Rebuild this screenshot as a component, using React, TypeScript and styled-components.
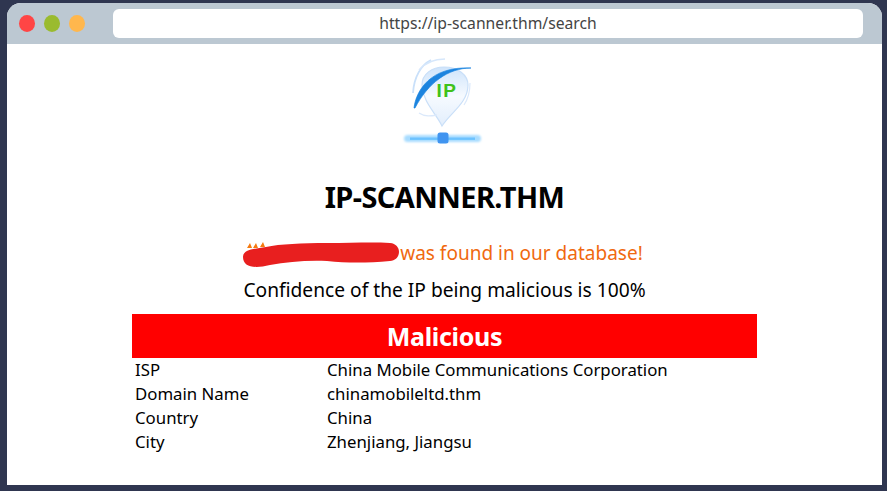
import React from "react";
import styled, { createGlobalStyle } from "styled-components";

const Global = createGlobalStyle`
  html, body { margin: 0; padding: 0; height: 100%; background: #2f3650; }
  body { font-family: "Noto Sans", "Open Sans", "Liberation Sans", sans-serif; overflow: hidden; }
`;
const Page = styled.div`
  box-sizing: border-box; width: 887px; height: 491px; padding: 3px 5px 6px 7px;
`;
const Window = styled.div`
  height: 100%; display: flex; flex-direction: column; background: #fff;
  border-radius: 14px 14px 0 0; overflow: hidden;
`;
const TitleBar = styled.div`
  flex: 0 0 41px; box-sizing: border-box; height: 41px; background: #bcc8d2;
  display: flex; align-items: flex-start; padding: 6px 19px 0 12px;
`;
const Dots = styled.div`
  display: flex; gap: 9px; margin-top: 6px; width: 94px; flex: 0 0 94px;
`;
const Dot = styled.span<{ $c: string }>`
  width: 16px; height: 17px; border-radius: 50%; background: ${p => p.$c};
`;
const Address = styled.div`
  flex: 1; height: 29px; background: #fff; border-radius: 6px; color: #444;
  font-size: 15.7px; line-height: 29px; text-align: center;
`;
const Content = styled.main`
  flex: 1; display: flex; flex-direction: column; align-items: center;
`;
const Logo = styled.svg`
  display: block; margin-top: 9px; width: 90px; height: 92px;
`;
const LogoText = styled.text`
  font-family: "Liberation Sans", sans-serif; font-size: 19px; font-weight: 700; fill: #3fc21a; letter-spacing: 1.5px;
`;
const Title = styled.h1`
  margin: 33px 0 0; font-size: 29px; line-height: 38px; font-weight: 700; color: #000; letter-spacing: -0.6px;
`;
const Found = styled.p`
  margin: 24px 0 0 -4px; font-size: 19px; line-height: 26px; color: #f0690f; display: flex; align-items: center;
`;
const Redaction = styled.svg`
  display: block; width: 158px; height: 30px; flex: none; margin: -2px 0;
`;
const Confidence = styled.p`
  margin: 11px 0 0; font-size: 19.2px; line-height: 26px; color: #000;
`;
const Banner = styled.div`
  margin-top: 11px; width: 625px; height: 44px; background: #ff0000; color: #fff;
  font-size: 25px; font-weight: 700; line-height: 44px; text-align: center; letter-spacing: -0.3px;
`;
const Details = styled.dl`
  margin: 0; width: 625px; display: grid; grid-template-columns: 192px 1fr; padding-left: 3px; box-sizing: border-box;
  font-size: 16.8px; line-height: 24px; color: #000;
  dt, dd { margin: 0; }
`;

const rows: [string, string][] = [
  ["ISP", "China Mobile Communications Corporation"],
  ["Domain Name", "chinamobileltd.thm"],
  ["Country", "China"],
  ["City", "Zhenjiang, Jiangsu"],
];

export default function App() {
  return (
    <Page>
      <Global />
      <Window>
        <TitleBar>
          <Dots>
            <Dot $c="#ff4545" />
            <Dot $c="#9abb2f" />
            <Dot $c="#ffb74d" />
          </Dots>
          <Address>https://ip-scanner.thm/search</Address>
        </TitleBar>
        <Content>
          <Logo viewBox="0 0 90 92">
            <defs>
              <linearGradient id="pin" x1="0" y1="0" x2="0" y2="1">
                <stop offset="0" stopColor="#cfe4fb" />
                <stop offset="0.5" stopColor="#f6faff" />
                <stop offset="1" stopColor="#e2eefc" />
              </linearGradient>
              <filter id="soft" x="-20%" y="-200%" width="140%" height="500%"><feGaussianBlur stdDeviation="1.1" /></filter>
              <filter id="soft2" x="-20%" y="-20%" width="140%" height="140%"><feGaussianBlur stdDeviation="0.35" /></filter>
            </defs>
            <path d="M42 73 C36 60 23 50 22 32 C22 21 32 14 44 14 C58 14 68 22 68 32 C68 50 50 60 42 73 Z" fill="url(#pin)" stroke="#c9dff8" strokeWidth="1.2" filter="url(#soft2)" />
            <path d="M13 40 C14 24 21 12 31 7" fill="none" stroke="#c9e0fa" strokeWidth="1.8" filter="url(#soft2)" />
            <path d="M19 17 C25 10 34 6 45 6" fill="none" stroke="#d6e7fb" strokeWidth="1.4" filter="url(#soft2)" />
            <path d="M70 30 C70 40 68 46 64 52" fill="none" stroke="#dbe9fb" strokeWidth="1.2" filter="url(#soft2)" />
            <path d="M19 60 C25 64 31 63 37 62" fill="none" stroke="#dbe9fb" strokeWidth="1.4" filter="url(#soft2)" />
            <path d="M14 55 C16 38 30 13 71 15 C48 15 28 30 15 55 Z" fill="#1b84df" stroke="#1b84df" strokeWidth="0.7" filter="url(#soft2)" />
            <LogoText x="36.5" y="44">IP</LogoText>
            <rect x="4" y="82" width="77" height="7" rx="3.5" fill="#a8dcff" filter="url(#soft)" />
            <rect x="10" y="84.5" width="65" height="2.4" fill="#6cc2ff" filter="url(#soft2)" />
            <rect x="37.5" y="79.5" width="11" height="11" rx="2.5" fill="#3f94f0" filter="url(#soft2)" />
          </Logo>
          <Title>IP-SCANNER.THM</Title>
          <Found>
            <Redaction viewBox="0 0 158 30">
              <path d="M5 10 L8 5 L10 10 Z M11 10 L14 5 L16 10 Z M18 9 L21 4 L23 9 Z" fill="#f57a10" />
              <path d="M1 19 C1 12 10 11 24 9 C38 6 60 5 85 5 C110 5 130 4 148 5 C160 6 160 22 148 23 C125 25 105 25 85 23 C65 22 45 24 28 27 C12 31 1 29 1 19 Z" fill="#e81f1f" />
            </Redaction>
            <span>was found in our database!</span>
          </Found>
          <Confidence>Confidence of the IP being malicious is 100%</Confidence>
          <Banner>Malicious</Banner>
          <Details>
            {rows.map(([k, v]) => (
              <React.Fragment key={k}>
                <dt>{k}</dt>
                <dd>{v}</dd>
              </React.Fragment>
            ))}
          </Details>
        </Content>
      </Window>
    </Page>
  );
}
